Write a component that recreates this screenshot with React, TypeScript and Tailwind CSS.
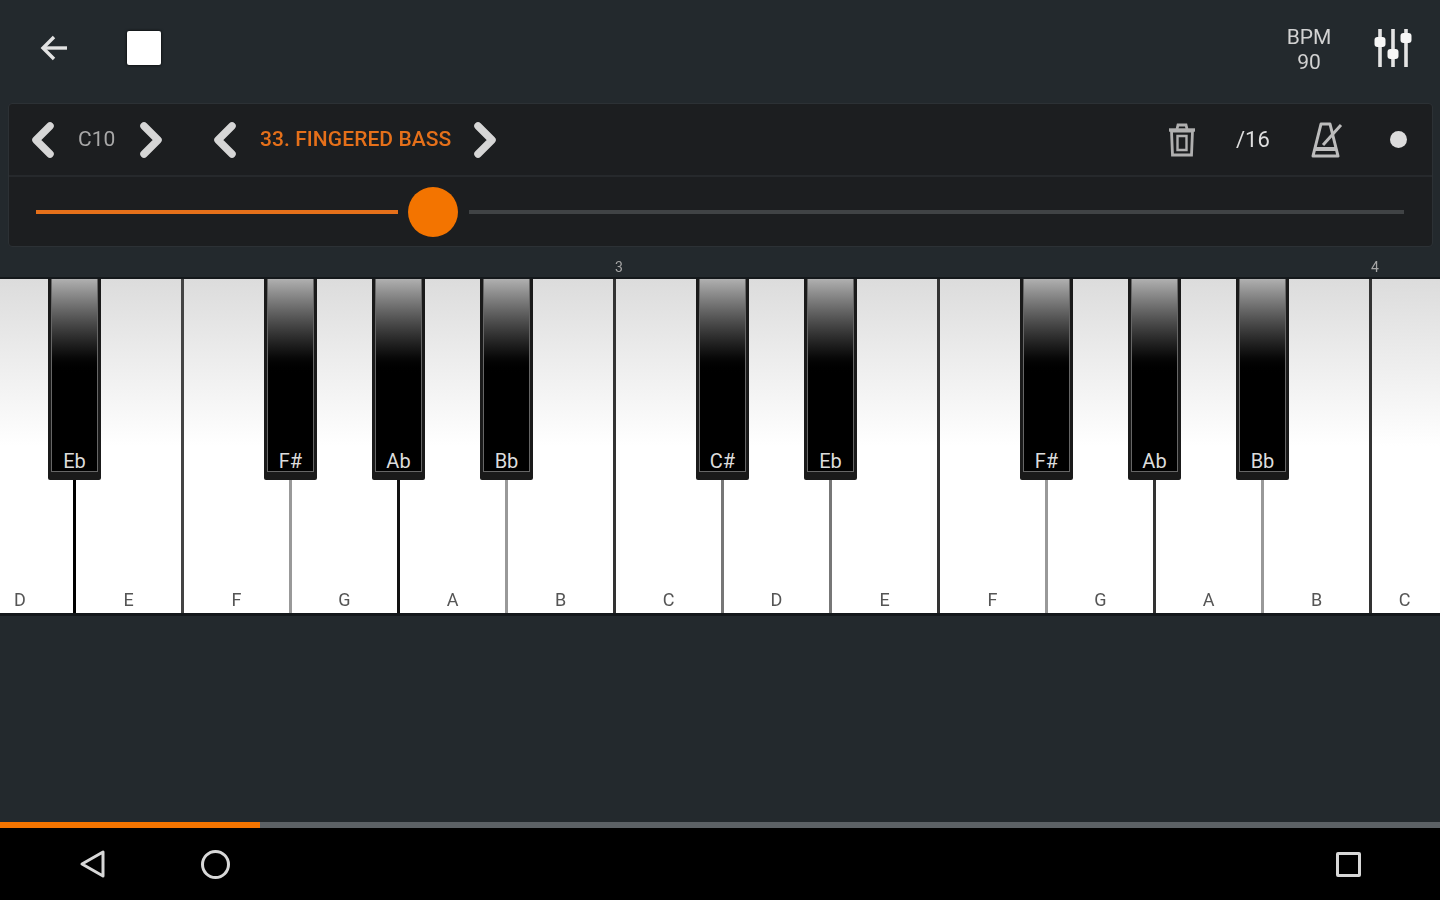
const whiteKeys = [
  { note: "D", width: "w-[76px]", line: "border-black", labelWidth: "w-[40px]" },
  { note: "E", width: "w-[108px]", line: "border-[#444]", labelWidth: "w-full" },
  { note: "F", width: "w-[108px]", line: "border-[#999]", labelWidth: "w-full" },
  { note: "G", width: "w-[108px]", line: "border-[#111]", labelWidth: "w-full" },
  { note: "A", width: "w-[108px]", line: "border-[#999]", labelWidth: "w-full" },
  { note: "B", width: "w-[108px]", line: "border-[#333]", labelWidth: "w-full" },
  { note: "C", width: "w-[108px]", line: "border-[#777]", labelWidth: "w-full" },
  { note: "D", width: "w-[108px]", line: "border-[#777]", labelWidth: "w-full" },
  { note: "E", width: "w-[108px]", line: "border-[#333]", labelWidth: "w-full" },
  { note: "F", width: "w-[108px]", line: "border-[#999]", labelWidth: "w-full" },
  { note: "G", width: "w-[108px]", line: "border-[#333]", labelWidth: "w-full" },
  { note: "A", width: "w-[108px]", line: "border-[#999]", labelWidth: "w-full" },
  { note: "B", width: "w-[108px]", line: "border-[#333]", labelWidth: "w-full" },
  { note: "C", width: "flex-1", line: "border-transparent", labelWidth: "w-full" },
];

const blackKeys = [
  { note: "Eb", left: "left-[48px]" },
  { note: "F#", left: "left-[264px]" },
  { note: "Ab", left: "left-[372px]" },
  { note: "Bb", left: "left-[480px]" },
  { note: "C#", left: "left-[696px]" },
  { note: "Eb", left: "left-[804px]" },
  { note: "F#", left: "left-[1020px]" },
  { note: "Ab", left: "left-[1128px]" },
  { note: "Bb", left: "left-[1236px]" },
];

function Chevron({ dir, className }: { dir: "left" | "right"; className?: string }) {
  return (
    <svg width="26" height="36" viewBox="0 0 26 36" fill="none" className={className}>
      <polyline
        points={dir === "left" ? "20,4 6,18 20,32" : "6,4 20,18 6,32"}
        stroke="#d6d6d6"
        strokeWidth="7.5"
        strokeLinecap="round"
        strokeLinejoin="round"
      />
    </svg>
  );
}

function TopBar() {
  return (
    <div className="flex h-[103px] items-center">
      <svg width="30" height="28" viewBox="0 0 30 28" fill="none" className="ml-[40px] mb-[7px]" stroke="#e2e2e2" strokeWidth="3.4">
        <path d="M27 14H3" />
        <path d="M14 3L3 14l11 11" />
      </svg>
      <div className="ml-[57px] mb-[8px] h-[34px] w-[34px] rounded-[2px] bg-white shadow-[0_0_3px_#000]" />
      <div className="ml-auto mb-[4px] flex w-[60px] flex-col items-center text-[21px] leading-[25px] text-[#d2d2d2]">
        <span>BPM</span>
        <span>90</span>
      </div>
      <svg width="38" height="44" viewBox="0 0 38 44" fill="none" className="ml-[35px] mr-[28px] mb-[7px]">
        <g stroke="#e4e4e4" strokeWidth="3.6">
          <path d="M6 3v38" />
          <path d="M19 3v38" />
          <path d="M32 3v38" />
        </g>
        <rect x="0.5" y="11" width="11" height="10" rx="3" fill="#f6f6f6" />
        <rect x="13.5" y="23" width="11" height="10" rx="3" fill="#f6f6f6" />
        <rect x="26.5" y="7" width="11" height="10" rx="3" fill="#f6f6f6" />
      </svg>
    </div>
  );
}

function ControlPanel() {
  return (
    <div className="ml-[8px] mr-[7px] h-[144px] rounded-[4px] border border-[#2c3135] bg-[#1c1e20]">
      <div className="flex h-[73px] items-center border-b-2 border-[#26292c]">
        <Chevron dir="left" className="ml-[21px]" />
        <span className="ml-[22px] w-[40px] text-[21px] text-[#a8a8a8]">C10</span>
        <Chevron dir="right" className="ml-[20px]" />
        <Chevron dir="left" className="ml-[48px]" />
        <span className="ml-[22px] text-[21px] font-medium tracking-[0.07px] text-[#e5701a]">33. FINGERED BASS</span>
        <Chevron dir="right" className="ml-[21px]" />
        <svg width="30" height="34" viewBox="0 0 30 34" fill="none" className="ml-auto" stroke="#b0b0b0" strokeWidth="2.8">
          <path d="M2 7h26" strokeWidth="3.4" />
          <path d="M10 6l1-4h8l1 4" />
          <path d="M4.5 8l1 24h19l1-24z" />
          <path d="M10.5 13h9v14h-9z" strokeWidth="2.4" />
        </svg>
        <span className="ml-[39px] w-[36px] text-[22px] text-[#dedede]">/16</span>
        <svg width="34" height="36" viewBox="0 0 34 36" fill="none" className="ml-[38px]" stroke="#bcbcbc" strokeWidth="3">
          <path d="M11 2h9l8 32H3z" strokeLinejoin="round" />
          <path d="M5 27h22" strokeWidth="4" />
          <path d="M13 23L31 3" />
        </svg>
        <div className="ml-[46px] mr-[25px] h-[17px] w-[17px] rounded-full bg-[#dcdcdc]" />
      </div>
      <div className="flex h-[70px] items-center">
        <div className="ml-[27px] h-[4px] w-[362px] bg-[#e5701a]" />
        <div className="ml-[10px] h-[50px] w-[50px] rounded-full bg-[#f37400]" />
        <div className="ml-[11px] mr-[28px] h-[4px] flex-1 bg-[#404345]" />
      </div>
    </div>
  );
}

function Keyboard() {
  return (
    <div className="relative flex h-[339px] border-t-2 border-b-[3px] border-[#14181b]">
      {whiteKeys.map((k, i) => (
        <div
          key={i}
          className={`flex h-full ${k.width} items-end border-r-[3px] ${k.line} bg-gradient-to-b from-[#dcdcdc] to-white to-50%`}
        >
          <span className={`${k.labelWidth} pb-[1px] text-center text-[18px] leading-[24px] text-[#555]`}>{k.note}</span>
        </div>
      ))}
      {blackKeys.map((k, i) => (
        <div
          key={i}
          className={`absolute top-0 ${k.left} h-[201px] w-[53px] rounded-b-[2px] bg-[#1a1a1a] px-[3px] pb-[8px]`}
        >
          <div className="flex h-full items-end justify-center border-x border-b border-[#666] bg-gradient-to-b from-[#b0b0b0] to-black to-[50%]">
            <span className="text-[20px] leading-[20px] text-[#dcdcdc]">{k.note}</span>
          </div>
        </div>
      ))}
    </div>
  );
}

function NavBar() {
  return (
    <div className="flex h-[72px] items-center bg-black">
      <svg width="28" height="30" viewBox="0 0 28 30" fill="none" className="ml-[79px]" stroke="#d8d8d8" strokeWidth="3" strokeLinejoin="round">
        <path d="M24 3v24L3 15z" />
      </svg>
      <div className="ml-[94px] h-[29px] w-[29px] rounded-full border-[3px] border-[#d8d8d8]" />
      <div className="ml-auto mr-[79px] h-[25px] w-[25px] rounded-[2px] border-[3px] border-[#d8d8d8]" />
    </div>
  );
}

export default function App() {
  return (
    <div className="h-[900px] w-[1440px] overflow-hidden bg-[#23292d]">
      <div className="flex h-full flex-col font-['Roboto',sans-serif] blur-[0.5px]">
        <TopBar />
        <ControlPanel />
        <div className="flex h-[30px] items-center pt-[10px] text-[14px] leading-none text-[#a6a6a6]">
          <span className="ml-[615px] w-[8px]">3</span>
          <span className="ml-[748px]">4</span>
        </div>
        <Keyboard />
        <div className="flex-1" />
        {/* song progress */}
        <div className="flex h-[6px]">
          <div className="w-[260px] bg-[#f37400]" />
          <div className="flex-1 bg-[#5c6165]" />
        </div>
        <NavBar />
      </div>
    </div>
  );
}
